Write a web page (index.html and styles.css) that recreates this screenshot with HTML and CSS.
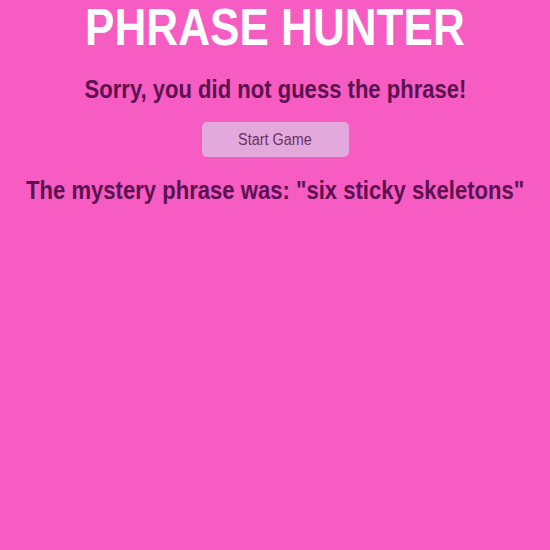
FILE: index.html
```html
<!DOCTYPE html>
<html>
<head>
<meta charset="utf-8">
<link rel="stylesheet" href="styles.css">
</head>
<body>
<div class="overlay">
  <h1 class="title">PHRASE HUNTER</h1>
  <h2 class="message">Sorry, you did not guess the phrase!</h2>
  <button class="btn-reset"><span class="btn-label">Start Game</span></button>
  <h2 class="reveal">The mystery phrase was: "six sticky skeletons"</h2>
</div>
</body>
</html>
```
FILE: styles.css
```css
html, body {
  margin: 0;
  padding: 0;
  height: 100%;
}
body {
  background: #f65cc2;
  font-family: "Liberation Sans", Arial, sans-serif;
}
.overlay {
  display: flex;
  flex-direction: column;
  align-items: center;
}
.title,
.message,
.reveal {
  white-space: nowrap;
  font-weight: bold;
}
.title {
  margin: 0;
  color: #ffffff;
  font-size: 52px;
  line-height: 54px;
  transform: scaleX(0.848);
}
.message {
  margin: 20px 0 0;
  color: #5c1250;
  font-size: 25px;
  line-height: 30px;
  transform: scaleX(0.882);
}
.btn-reset {
  margin-top: 18px;
  width: 147px;
  height: 35px;
  padding: 0;
  border: none;
  border-radius: 5px;
  background: #e4a9dc;
  color: #6a3068;
  font-family: "Liberation Sans", Arial, sans-serif;
  font-size: 16px;
}
.btn-label {
  display: inline-block;
  transform: scaleX(0.9);
}
.reveal {
  margin: 18px 0 0;
  color: #5c1250;
  font-size: 25px;
  line-height: 30px;
  transform: scaleX(0.883);
}
```
